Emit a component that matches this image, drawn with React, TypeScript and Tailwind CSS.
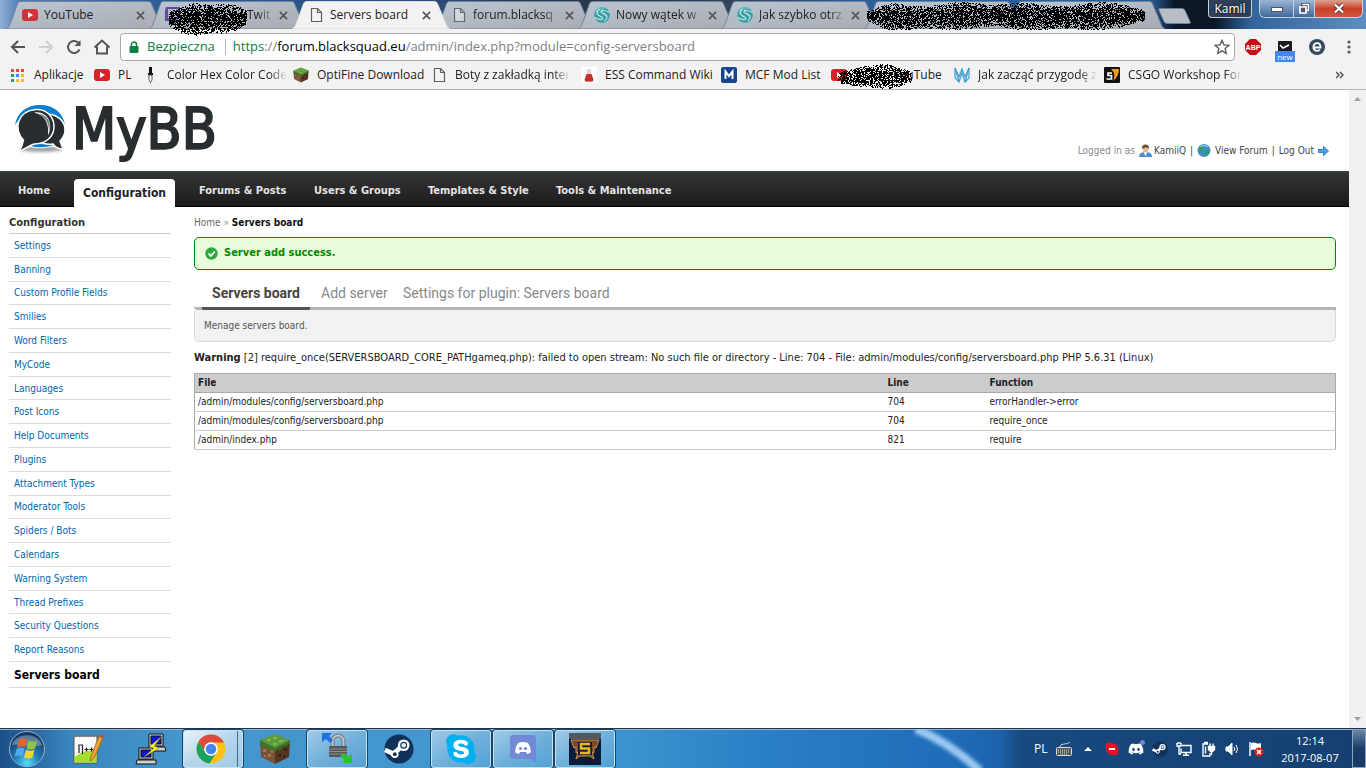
import type { ReactNode } from "react"
import { FaDiscord, FaSkype } from "react-icons/fa"
import clsx from "clsx"

const UI_FONT = "font-['Open_Sans','Noto_Sans',sans-serif]"
const PAGE_FONT = "font-['DejaVu_Sans_Condensed','DejaVu_Sans',sans-serif]"

/* ---------- Scribble used to hide private text ---------- */

function Scribble({ width, height, seed, className }: { width: number; height: number; seed: number; className: string }) {
  let state = seed
  const random = () => {
    state = (state + 0x6d2b79f5) | 0
    let t = Math.imul(state ^ (state >>> 15), 1 | state)
    t = (t + Math.imul(t ^ (t >>> 7), 61 | t)) ^ t
    return ((t ^ (t >>> 14)) >>> 0) / 4294967296
  }
  let d = ""
  for (let y = 0; y < height; y++) {
    for (let x = 0; x < width; x++) {
      const fromEnd = Math.min(x, width - x) / 30
      const reach = (height / 2) * Math.sqrt(Math.min(1, fromEnd + 0.15)) * (0.9 + 0.1 * Math.sin(x / 11 + seed))
      const dy = Math.abs(y - height / 2 - Math.sin(x / 23 + seed)) / reach
      const density = dy < 1 ? 0.78 * (1 - dy * dy * dy * 0.6) : 0
      if (random() < density) d += `M${x} ${y}h1v1h-1z`
    }
  }
  return (
    <svg width={width} height={height} className={clsx("absolute pointer-events-none z-20", className)} shapeRendering="crispEdges" aria-hidden="true">
      <path d={d} fill="#000" />
    </svg>
  )
}

/* ---------- Small icons ---------- */

function YouTubeIcon() {
  return (
    <svg width="16" height="16" viewBox="0 0 16 16">
      <rect x="0" y="2" width="16" height="12" rx="3" fill="#d6252a" />
      <path d="M6 5l5 3-5 3z" fill="#fff" />
    </svg>
  )
}

function PageIcon() {
  return (
    <svg width="16" height="16" viewBox="0 0 16 16" fill="none" stroke="#5f5f5f" strokeWidth="1.2">
      <path d="M3.5 1.5h6l4 4v9h-10z" fill="#f8f8f8" fillOpacity=".5" />
      <path d="M9.5 1.5v4h4" />
    </svg>
  )
}

function TwitchIcon() {
  return (
    <svg width="16" height="16" viewBox="0 0 16 16">
      <path d="M1 0h14v10l-4 4H8l-2 2H4v-2H0V3z" fill="#5b3d9c" />
      <path d="M3 2h10v7l-2 2H8l-2 2v-2H3z" fill="#b6b6c6" />
      <path d="M6 4h1.500v4H6zM10 4h1.500v4H10z" fill="#5b3d9c" />
    </svg>
  )
}

function SwirlIcon() {
  return (
    <svg width="16" height="16" viewBox="0 0 16 16">
      <circle cx="8" cy="8" r="7.800" fill="#249fa6" />
      <path d="M1 3C4 0 10-.5 13 2 9 1.500 5 2.500 4.500 5 4.500 7 12 6 14 9" fill="#4dc0bf" />
      <path d="M15.500 5.500C11 3 7.500 3 7 4.500S13 7 13 10c0 1.500-1 3-2.500 4" fill="none" stroke="#d5e2e6" strokeWidth="1.200" />
      <path d="M.5 10.500C5 13 8.500 13 9 11.500S3 9 3 6c0-1.500 1-3 2.500-4" fill="none" stroke="#d5e2e6" strokeWidth="1.200" />
    </svg>
  )
}

function GrassBlock({ size }: { size: number }) {
  return (
    <svg width={size} height={size} viewBox="0 0 32 32">
      <path d="M1 8l15 7v16L2 24z" fill="#7b5238" />
      <path d="M31 8l-15 7v16l14-7z" fill="#553621" />
      <path d="M16 1l15 6-15 8L1 7z" fill="#5f9a3b" />
      <path d="M1 7l15 8v4l-3-3-2 2-3-4-3 1-2-3-2 1zM31 7l-15 8v4l3-3 2 1 3-4 3 1 2-3 2 1z" fill="#3f7424" />
      <path d="M4 16h3v3H4zM9 21h3v3H9zM12 17h2v3h-2zM5 22h2v2H5z" fill="#9c7253" />
      <path d="M19 21h3v3h-3zM25 15h3v3h-3zM24 22h2v3h-2z" fill="#3c2415" />
      <path d="M14 4h4v2h-4zM8 6h4v2H8zM20 7h4v2h-4zM14 10h4v2h-4z" fill="#7fb855" />
    </svg>
  )
}

function PenIcon() {
  return (
    <svg width="16" height="16" viewBox="0 0 16 16">
      <path d="M6 0h3v6h1v2H5V6h1z" fill="#111" />
      <path d="M6 8h3v5l-1.500 2.500L6 13z" fill="#fff" stroke="#333" strokeWidth=".8" />
    </svg>
  )
}

function FlaskIcon() {
  return (
    <svg width="16" height="16" viewBox="0 0 16 16">
      <rect width="16" height="16" fill="#fff" />
      <path d="M6 2h4v4l2.500 7-1 2h-7l-1-2L6 6z" fill="#e6d2d0" />
      <path d="M5.500 7h5l2 6-1 1.500h-7l-1-1.500z" fill="#c9302a" />
    </svg>
  )
}

function McfIcon() {
  return (
    <svg width="16" height="16" viewBox="0 0 16 16">
      <rect width="16" height="16" rx="2" fill="#17458b" />
      <path d="M4.500 12V4.500L8 9l3.500-4.500V12" fill="none" stroke="#fff" strokeWidth="2" />
    </svg>
  )
}

function WolfIcon() {
  return (
    <svg width="16" height="16" viewBox="0 0 16 16" fill="none" stroke="#3d9fd0" strokeWidth="1.200">
      <path d="M1 1v10l4 4 3-9 3 9 4-4V1l-4 9-3-8-3 8z" />
      <path d="M1 1l4 14M15 1l-4 14" />
    </svg>
  )
}

function SourceIcon() {
  return (
    <svg width="16" height="16" viewBox="0 0 16 16">
      <rect width="16" height="16" rx="1" fill="#111" />
      <path d="M7 2h8c0 5-2 9-6 12 2-5 2-8-2-12z" fill="#f09a20" />
      <path d="M8 6H4v2.500h3.500V12H2.500" fill="none" stroke="#111" strokeWidth="4" />
      <path d="M8 6H4v2.500h3.500V12H2.500" fill="none" stroke="#fff" strokeWidth="1.700" />
    </svg>
  )
}

function AppsIcon() {
  const colors = ["#e8453c", "#e8453c", "#e8453c", "#2f9e58", "#4587f4", "#f9bb2d", "#2f9e58", "#f9bb2d", "#f9bb2d"]
  return (
    <svg width="14" height="14" viewBox="0 0 14 14">
      {colors.map((color, i) => (
        <rect key={i} x={1 + (i % 3) * 5} y={1 + Math.floor(i / 3) * 5} width="3" height="3" fill={color} />
      ))}
    </svg>
  )
}

/* ---------- Browser tabs ---------- */

interface TabInfo {
  title: string
  icon: ReactNode
  active?: boolean
  faded?: boolean
}

const tabs: TabInfo[] = [
  { title: "YouTube", icon: <YouTubeIcon /> },
  { title: "                 - Twit", icon: <TwitchIcon />, faded: true },
  { title: "Servers board", icon: <PageIcon />, active: true },
  { title: "forum.blacksq", icon: <PageIcon />, faded: true },
  { title: "Nowy wątek w", icon: <SwirlIcon />, faded: true },
  { title: "Jak szybko otrz", icon: <SwirlIcon />, faded: true },
  { title: "", icon: null },
  { title: "", icon: null },
]

function BrowserTab({ tab }: { tab: TabInfo }) {
  return (
    <div className={clsx("relative flex items-center h-7 w-[158px] -mr-[15px] pl-4 shrink-0", tab.active && "z-10")}>
      <svg className="absolute inset-0 w-full h-full" viewBox="0 0 158 28" preserveAspectRatio="none">
        <path
          d="M0 28C3 27 4 23 6 18L11 4C12 1 13 .5 15 .5H142C144 .5 145 1 146 4L152 18C154 23 155 27 158 28z"
          fill={tab.active ? "#f2f2f2" : "url(#tabFill)"}
          stroke={tab.active ? "#d8dce2" : "#71839b"}
          strokeWidth="1"
        />
      </svg>
      <span className={clsx("relative w-4 h-4 shrink-0", !tab.active && "opacity-90")}>{tab.icon}</span>
      <span
        className={clsx(
          "relative ml-[6px] w-[88px] whitespace-pre text-xs text-[#222]",
          tab.faded && "[mask-image:linear-gradient(to_right,black_80%,transparent)]"
        )}
      >
        {tab.title}
      </span>
      <button aria-label="Close tab" className="relative w-4 h-4 flex items-center justify-center">
        <svg width="9" height="9" viewBox="0 0 10 10" stroke="#555" strokeWidth="1.800">
          <path d="M1 1l8 8M9 1l-8 8" />
        </svg>
      </button>
    </div>
  )
}

function TabStrip() {
  return (
    <div className="relative flex items-end h-[29px] pl-[6px] bg-[linear-gradient(to_right,#8fb0d6_0px,#4d7cb2_20px,#2c5c94_170px,#2b4f7d_420px,#27354a_560px,#33455c_750px,#2a6099_860px,#2a6099_1150px,#0c1626_1175px,#0c1626_1215px,#31639c_1250px,#5f8dc0_1366px)]">
      <svg width="0" height="0" className="absolute">
        <defs>
          <linearGradient id="tabFill" x1="0" y1="0" x2="1" y2="1">
            <stop offset="0" stopColor="#bac5d3" />
            <stop offset="1" stopColor="#a9acb1" />
          </linearGradient>
        </defs>
      </svg>
      {tabs.map((tab, i) => (
        <BrowserTab key={i} tab={tab} />
      ))}
      <button aria-label="New tab" className="self-start ml-2 mt-2 shrink-0">
        <svg width="34" height="16" viewBox="0 0 34 16">
          <path d="M1 .5h23q2 0 3 2l5 11q1 2-1 2H9q-2 0-3-2L1 2.500q-1-2 1-2z" fill="#b8bec6" stroke="#6d7f95" />
        </svg>
      </button>
      <Scribble width={78} height={36} seed={7} className="left-[169px] top-0" />
      <Scribble width={278} height={28} seed={31} className="left-[867px] top-[2px]" />
      <div className="self-start ml-auto mr-[3px] flex items-start shrink-0">
        <button className="h-[18px] w-[44px] mr-[7px] rounded-b border border-t-0 border-[#c3cfdf] bg-[#30405a] text-xs leading-4 text-white [text-shadow:0_0_3px_black]">
          Kamil
        </button>
        <div className="flex h-[18px] rounded-b-md border border-t-0 border-[#c3d3e6] overflow-hidden">
          <button aria-label="Minimize" className="w-[34px] flex items-center justify-center bg-gradient-to-b from-[#9db6d4] to-[#3f6a9d] border-r border-[#c3d3e6]">
            <svg width="12" height="8">
              <rect x=".5" y="2.500" width="11" height="4" fill="#fff" stroke="#4c5569" />
            </svg>
          </button>
          <button aria-label="Restore" className="w-[21px] flex items-center justify-center bg-gradient-to-b from-[#9db6d4] to-[#3f6a9d] border-r border-[#c3d3e6]">
            <svg width="12" height="12" fill="none">
              <path d="M4.500 1.500h6v6h-6z" stroke="#4c5569" strokeWidth="3" />
              <path d="M4.500 1.500h6v6h-2" stroke="#fff" strokeWidth="1.500" />
              <path d="M2 4h6v6H2z" fill="#4c5569" stroke="#fff" strokeWidth="1.700" />
            </svg>
          </button>
          <button aria-label="Close" className="w-[47px] flex items-center justify-center bg-gradient-to-b from-[#e0a090] via-[#c8402a] to-[#d0573f]">
            <svg width="12" height="11" viewBox="0 0 12 11">
              <path d="M2 1.500l8 8M10 1.500l-8 8" stroke="#5c2f35" strokeWidth="4" />
              <path d="M2 1.500l8 8M10 1.500l-8 8" stroke="#fff" strokeWidth="2.300" />
            </svg>
          </button>
        </div>
      </div>
    </div>
  )
}

/* ---------- Address bar ---------- */

function Toolbar() {
  return (
    <div className="flex items-center h-9 px-[9px] bg-[#f2f2f2]">
      <div className="flex items-center gap-[10px] w-[111px]">
        <button aria-label="Back">
          <svg width="18" height="18" viewBox="0 0 18 18" fill="none" stroke="#555" strokeWidth="2">
            <path d="M16 9H3M9 3L3 9l6 6" />
          </svg>
        </button>
        <button aria-label="Forward">
          <svg width="18" height="18" viewBox="0 0 18 18" fill="none" stroke="#cfcfcf" strokeWidth="2">
            <path d="M2 9h13M9 3l6 6-6 6" />
          </svg>
        </button>
        <button aria-label="Reload">
          <svg width="18" height="18" viewBox="0 0 18 18" fill="none" stroke="#555" strokeWidth="2">
            <path d="M14.500 11.500A6 6 0 1 1 13 4.500L15 6.500" />
            <path d="M15.500 2v6h-6z" fill="#555" stroke="none" />
          </svg>
        </button>
        <button aria-label="Home">
          <svg width="18" height="18" viewBox="0 0 18 18" fill="none" stroke="#555" strokeWidth="2">
            <path d="M1.500 9.500L9 2.500l7.500 7M4 8.500V15.500h10V8.500" />
          </svg>
        </button>
      </div>
      <div className="flex flex-1 items-center h-7 px-2 bg-white border border-[#a9a9a9] rounded-sm">
        <svg width="10" height="13" viewBox="0 0 10 13">
          <path d="M2.500 6V3.500a2.500 2.500 0 0 1 5 0V6" fill="none" stroke="#0b8043" strokeWidth="1.500" />
          <rect x=".5" y="5" width="9" height="7" rx="1" fill="#0b8043" />
        </svg>
        <span className="ml-2 text-[13px] text-[#0b8043]">Bezpieczna</span>
        <span className="w-px h-4 ml-[10px] mr-[7px] bg-[#b5b5b5]" />
        <span className="whitespace-nowrap text-[13px] text-[#808080]">
          <span className="text-[#0b8043]">https</span>://<span className="text-black">forum.blacksquad.eu</span>/admin/index.php?module=config-serversboard
        </span>
        <button aria-label="Bookmark this page" className="ml-auto -mr-1">
          <svg width="16" height="16" viewBox="0 0 16 16" fill="none" stroke="#5a5a5a" strokeWidth="1.400">
            <path d="M8 1.500l2 4.400 4.700.5-3.500 3.200 1 4.700L8 11.900l-4.200 2.400 1-4.700L1.300 6.400 6 5.900z" />
          </svg>
        </button>
      </div>
      <div className="flex items-center gap-4 ml-[10px]">
        <button aria-label="Adblock Plus">
          <svg width="16" height="16" viewBox="0 0 16 16">
            <path d="M5 0h6l5 5v6l-5 5H5l-5-5V5z" fill="#c70d12" />
            <text x="8" y="11" textAnchor="middle" fontSize="7" fontWeight="700" fill="#fff" fontFamily="Liberation Sans">ABP</text>
          </svg>
        </button>
        <button aria-label="Inventory helper" className="flex flex-col items-center w-5 -mx-[2px] -mb-[9px]">
          <svg width="14" height="10" viewBox="0 0 14 10">
            <rect width="14" height="12" rx="1" fill="#1b1b1b" />
            <path d="M2 4l3 3 6-3" fill="none" stroke="#fff" strokeWidth="1.500" />
          </svg>
          <span className="w-5 h-[11px] bg-[#4285f4] text-[8px] leading-[11px] text-white">new</span>
        </button>
        <button aria-label="Encrypted browsing">
          <svg width="16" height="16" viewBox="0 0 16 16">
            <circle cx="8" cy="8" r="8" fill="#34495e" />
            <path d="M4.500 8.500h7c0-6-7-5.500-7-.5 0 4 4.500 5 6.500 2.500" fill="none" stroke="#fff" strokeWidth="1.900" />
          </svg>
        </button>
        <button aria-label="Menu" className="w-4 flex justify-center">
          <svg width="4" height="14" viewBox="0 0 4 14" fill="#5a5a5a">
            <circle cx="2" cy="2" r="1.600" />
            <circle cx="2" cy="7" r="1.600" />
            <circle cx="2" cy="12" r="1.600" />
          </svg>
        </button>
      </div>
    </div>
  )
}

const bookmarks = [
  { title: "Aplikacje", icon: <AppsIcon />, width: "w-[84px]", gap: "gap-[10px]" },
  { title: "PL", icon: <YouTubeIcon />, width: "w-[49px]", gap: "gap-2" },
  { title: "Color Hex Color Code", icon: <PenIcon />, width: "w-[150px]", gap: "gap-2", faded: true },
  { title: "OptiFine Download", icon: <GrassBlock size={16} />, width: "w-[138px]", gap: "gap-2" },
  { title: "Boty z zakładką inter", icon: <PageIcon />, width: "w-[150px]", gap: "gap-2", faded: true },
  { title: "ESS Command Wiki", icon: <FlaskIcon />, width: "w-[140px]", gap: "gap-2" },
  { title: "MCF Mod List", icon: <McfIcon />, width: "w-[110px]", gap: "gap-2" },
  { title: "            YouTube", icon: <YouTubeIcon />, width: "w-[123px]", gap: "gap-2" },
  { title: "Jak zacząć przygodę z", icon: <WolfIcon />, width: "w-[150px]", gap: "gap-2", faded: true },
  { title: "CSGO Workshop For", icon: <SourceIcon />, width: "w-[138px]", gap: "gap-2", faded: true },
]

function BookmarksBar() {
  return (
    <nav className="relative flex items-center h-[25px] pb-[6px] pt-px pl-[10px] pr-[22px] bg-[#f2f2f2] border-b border-[#b6b4b6] text-xs text-[#222]">
      {bookmarks.map((item, i) => (
        <a key={i} href="#" className={clsx("flex items-center shrink-0", item.width, item.gap)}>
          <span className="shrink-0">{item.icon}</span>
          <span className={clsx("whitespace-pre", item.faded && "[mask-image:linear-gradient(to_right,black_85%,transparent)]")}>
            {item.title}
          </span>
        </a>
      ))}
      <button aria-label="More bookmarks" className="ml-auto">
        <svg width="8" height="8" viewBox="0 0 8 8" fill="none" stroke="#555" strokeWidth="1.500">
          <path d="M0 1l3 3-3 3M4 1l3 3-3 3" />
        </svg>
      </button>
      <Scribble width={74} height={26} seed={53} className="left-[838px] -top-px" />
    </nav>
  )
}

/* ---------- MyBB admin page ---------- */

function Logo() {
  return (
    <div className="flex items-start">
      <svg width="52" height="52" viewBox="0 0 52 52" className="mt-[13px]">
        <defs>
          <filter id="logoShadow" x="-20%" y="-60%" width="140%" height="220%">
            <feGaussianBlur stdDeviation="1.500" />
          </filter>
        </defs>
        <ellipse cx="27" cy="46" rx="22" ry="3" fill="#777" opacity=".7" filter="url(#logoShadow)" />
        <path d="M1 22C3 9 13 2 26 2s23 7 25 20c-4-7-12-12-25-12S5 15 1 22z" fill="#0a7fd0" />
        <path d="M16 43c8-5 16-5 24-1-6 3-18 4-24 1z" fill="#0a7fd0" stroke="#fff" />
        <path d="M34 11c11 1 17 8 17 16 0 5-2 8-5 11l3 8c-4 0-8-2-10-5-7 1-13-1-15-4z" fill="#282d2f" stroke="#fff" strokeWidth="1.500" />
        <path d="M22 6.500c12-.5 18 9 18 17 0 10-8 17.500-20 17.500-3 1-8 4-15 7.500 3-4 4-8 4.500-11.500C-1 27 3 8 22 6.500z" fill="#282d2f" stroke="#fff" strokeWidth="1.500" />
        <path d="M20 9.500c14-2 20 12 14 23 1-9-1-20-14-23z" fill="#fff" />
        <path d="M24 10.500c10 1 14 10 11 18 0-8-3-14-11-18z" fill="#282d2f" opacity=".6" />
      </svg>
      <span className="ml-[6px] mt-[3px] text-[57px] leading-[72px] text-[#282d2f] [-webkit-text-stroke:2px_#282d2f]">MyBB</span>
    </div>
  )
}

function Header() {
  return (
    <header className="flex justify-between h-[81px] pl-[14px] pr-5">
      <Logo />
      <div className="flex items-center self-end mb-3 text-[10px] leading-4 text-[#444]">
        <span className="text-[#8b8b8b] mr-1">Logged in as</span>
        <a href="#" className="flex items-center gap-[2px]">
          <svg width="13" height="14" viewBox="0 0 13 14">
            <path d="M0 13c0-4 3-5 6.500-5s6.500 1 6.500 5z" fill="#4a8fd6" />
            <path d="M4.500 8h4l-2 4z" fill="#fff" />
            <ellipse cx="6.500" cy="5" rx="2.800" ry="3.500" fill="#e8b98c" />
            <path d="M3 5c-1-6 8-6 7 0-1-2-5-2-7 0z" fill="#6b4a2c" />
          </svg>
          KamiiQ
        </a>
        <span className="mx-1">|</span>
        <a href="#" className="flex items-center gap-1">
          <svg width="14" height="14" viewBox="0 0 13 14">
            <circle cx="6.500" cy="6.500" r="6.500" fill="#3f8ccc" />
            <path d="M3 2c3 0 4 1 3 3s-3 2-4 1S1 4 3 2zM7 7c3-1 5 0 5 1-1 3-3 4-4 4-1-1-1-3-1-5z" fill="#2f9e58" />
            <path d="M3 2.500q3-2 7 0" stroke="#b8dcf4" fill="none" />
          </svg>
          View Forum
        </a>
        <span className="mx-1">|</span>
        <a href="#" className="flex items-center gap-1">
          Log Out
          <svg width="11" height="10" viewBox="0 0 11 10">
            <path d="M.5 3.500h5v-3L10.500 5l-5 4.500v-3h-5z" fill="#4aa0e4" stroke="#2c84cf" />
          </svg>
        </a>
      </div>
    </header>
  )
}

function MainMenu() {
  return (
    <nav className="flex items-center h-9 pt-1 pl-[18px] bg-gradient-to-b from-[#363636] to-[#1b1b1b] border-t border-t-[#2f4646] border-b border-b-black text-[11px] font-bold text-[#e3e3e3]">
      <a href="#" className="w-14">Home</a>
      <a href="#" className="self-end -mb-px w-[101px] h-7 mr-6 rounded-t bg-white text-center text-xs leading-7 text-[#222]">Configuration</a>
      <a href="#" className="w-[115px]">Forums &amp; Posts</a>
      <a href="#" className="w-[114px]">Users &amp; Groups</a>
      <a href="#" className="w-32">Templates &amp; Style</a>
      <a href="#">Tools &amp; Maintenance</a>
    </nav>
  )
}

const sideLinks = [
  "Settings",
  "Banning",
  "Custom Profile Fields",
  "Smilies",
  "Word Filters",
  "MyCode",
  "Languages",
  "Post Icons",
  "Help Documents",
  "Plugins",
  "Attachment Types",
  "Moderator Tools",
  "Spiders / Bots",
  "Calendars",
  "Warning System",
  "Thread Prefixes",
  "Security Questions",
  "Report Reasons",
]

function Sidebar() {
  return (
    <aside className="w-[162px] shrink-0">
      <h2 className="pt-2 pb-[2px] text-[11px] leading-4 font-bold text-[#333] border-b border-[#ccc]">Configuration</h2>
      <ul className="grid auto-rows-fr h-[428px] text-[10px]">
        {sideLinks.map((label) => (
          <li key={label} className="flex items-center pl-[5px] border-b border-[#ddd]">
            <a href="#" className="text-[#0066b0]">{label}</a>
          </li>
        ))}
      </ul>
      <a href="#" className="block pl-[5px] h-[26px] leading-[26px] text-xs font-bold text-black border-b border-[#ddd]">Servers board</a>
    </aside>
  )
}

const backtrace = [
  { file: "/admin/modules/config/serversboard.php", line: 704, fn: "errorHandler->error" },
  { file: "/admin/modules/config/serversboard.php", line: 704, fn: "require_once" },
  { file: "/admin/index.php", line: 821, fn: "require" },
]

function Content() {
  return (
    <main className="flex-1 min-w-0 pt-2">
      <div className="text-[10px] leading-4 text-[#666]">
        <a href="#">Home</a> <span className="text-[#999]">»</span> <strong className="text-[#111]">Servers board</strong>
      </div>
      <div className="flex items-center gap-[6px] h-[33px] mt-[6px] pl-[10px] border border-[#080] rounded-[5px] bg-[#e8fcdc] text-[11px] font-bold text-[#080]">
        <svg width="13" height="13" viewBox="0 0 13 13">
          <circle cx="6.500" cy="6.500" r="6.200" fill="#2fa83f" />
          <path d="M3.500 6.500l2.300 2.500 4-4.500" fill="none" stroke="#fff" strokeWidth="1.800" />
        </svg>
        Server add success.
      </div>
      <div className="flex mt-[9px] pl-2 font-[Roboto,'Open_Sans',sans-serif] text-sm leading-7 whitespace-nowrap text-[#888] border-b-[3px] border-[#b5b5b5] rounded-bl-sm">
        <a href="#" className="-mb-[3px] w-[108px] text-center border-b-[3px] border-[#555] font-bold text-[#444]">Servers board</a>
        <a href="#" className="ml-[11px] w-[82px]">Add server</a>
        <a href="#">Settings for plugin: Servers board</a>
      </div>
      <div className="h-[32px] pl-[9px] leading-[31px] text-[10px] text-[#555] bg-[#f2f2f2] border border-t-0 border-[#d8d8d8] rounded-b-[5px]">Menage servers board.</div>
      <p className="mt-2 mb-[7px] text-[11px] leading-4 text-[#222]">
        <strong>Warning</strong> [2] require_once(SERVERSBOARD_CORE_PATHgameq.php): failed to open stream: No such file or directory - Line: 704 - File: admin/modules/config/serversboard.php PHP 5.6.31 (Linux)
      </p>
      <table className="w-full table-fixed border-collapse border border-[#aaa] text-[10px] leading-[18px] text-left text-[#222]">
        <thead>
          <tr className="bg-[#ccc] border-b border-[#aaa]">
            <th className="w-[690px] pl-[3px]">File</th>
            <th className="w-[102px] pl-[3px]">Line</th>
            <th className="pl-[3px]">Function</th>
          </tr>
        </thead>
        <tbody>
          {backtrace.map((row, i) => (
            <tr key={i} className="border-b border-[#ccc]">
              <td className="pl-[3px]">{row.file}</td>
              <td className="pl-[3px]">{row.line}</td>
              <td className="pl-[3px]">{row.fn}</td>
            </tr>
          ))}
        </tbody>
      </table>
    </main>
  )
}

/* ---------- Windows taskbar ---------- */

function StartOrb() {
  return (
    <svg width="38" height="38" viewBox="0 0 38 38">
      <defs>
        <radialGradient id="orb" cx=".5" cy=".9" r=".8">
          <stop offset="0" stopColor="#4fe0f8" />
          <stop offset=".45" stopColor="#2479b5" />
          <stop offset="1" stopColor="#17395f" />
        </radialGradient>
      </defs>
      <circle cx="19" cy="19" r="17.500" fill="url(#orb)" stroke="#8fb6d4" />
      <path d="M4 15C8 2 30 2 34 15 26 18 14 13 4 15z" fill="#fff" opacity=".3" />
      <path d="M11 10q4-2.500 8-.5l-2 8q-4-2-8 .5z" fill="#e8622c" />
      <path d="M20.500 10.500q4 2.500 8.500 0l-2 8q-4 2-8.500 0z" fill="#8fc641" />
      <path d="M8.500 19q4-2.500 8-.5l-2 8q-4-2-8 .5z" fill="#4fa8e8" />
      <path d="M18 19.500q4 2.500 8.500 0l-2 8q-4 2-8.500 0z" fill="#fbd23c" />
    </svg>
  )
}

function NotepadIcon() {
  return (
    <svg width="32" height="32" viewBox="0 0 32 32">
      <path d="M1 3h23v27H1z" fill="#fafafa" stroke="#555" />
      <path d="M1.500 24q10-8 22-6v11.500h-22z" fill="#a6e02c" />
      <path d="M2 3h21" stroke="#777" strokeDasharray="2 1" strokeWidth="2" />
      <path d="M6 20v-8h3.500v9M11.500 16.500h4M13.500 14.500v4M16.500 16.500h4M18.500 14.500v4" stroke="#222" strokeWidth="1.200" fill="none" />
      <path d="M26 3l4 2-9 20-4 3 1-5z" fill="#f0a030" stroke="#8c5a1a" strokeWidth=".7" />
      <path d="M26 3l2-2 3 2-1 2z" fill="#d8473c" />
    </svg>
  )
}

function PuttyIcon() {
  return (
    <svg width="32" height="32" viewBox="0 0 32 32">
      <g stroke="#111" strokeWidth="1">
        <path d="M14 1h14v12H14zM13 14h17l1 4H13z" fill="#d0d0d0" />
        <path d="M16 3h10v8H16z" fill="#1414d8" />
        <path d="M4 15h14v11H4zM2 27h19v4H1z" fill="#d0d0d0" />
        <path d="M6 17h10v7H6z" fill="#1414d8" />
        <path d="M27 3L14 14l5 1L9 24l15-9-5-2z" fill="#ff0" stroke="#776" strokeWidth=".5" />
      </g>
    </svg>
  )
}

function ChromeIcon() {
  return (
    <svg width="30" height="30" viewBox="0 0 30 30">
      <circle cx="15" cy="15" r="14.500" fill="#fbc116" />
      <path d="M2.500 7.700A14.500 14.500 0 0 1 28 8.500H15a6.500 6.500 0 0 0-5.700 9.700z" fill="#dd4b3e" />
      <path d="M2.500 7.700a14.500 14.500 0 0 0 11 21.700L20.600 18.300a6.500 6.500 0 0 1-11.200 0z" fill="#1aa15f" />
      <circle cx="15" cy="15" r="6.800" fill="#fff" />
      <circle cx="15" cy="15" r="5.300" fill="#4587f0" />
    </svg>
  )
}

function WinScpIcon() {
  return (
    <svg width="32" height="32" viewBox="0 0 32 32">
      <path d="M11.500 14V8a5.500 5.500 0 0 1 11 0v6" fill="none" stroke="#75797b" strokeWidth="3.800" />
      <path d="M11.500 14V8a5.500 5.500 0 0 1 11 0v6" fill="none" stroke="#c2c6c8" strokeWidth="1.800" />
      <rect x="8" y="13" width="18" height="11" rx="1" fill="#54575a" />
      <path d="M8 16h18M8 18.500h18M8 21h18" stroke="#8b8e90" />
      <path d="M1 0h10L8 3l4 4-3 3-4-4-4 3z" fill="#1f70e0" />
      <path d="M31 30H21l3-3-5-4 4-3 4 4 4-3z" fill="#28c42e" />
    </svg>
  )
}

function SteamDisc({ size }: { size: number }) {
  return (
    <svg width={size} height={size} viewBox="0 0 32 32">
      <circle cx="16" cy="16" r="15.500" fill="#10315a" />
      <path d="M1 17l9 4 8-7" stroke="#fff" strokeWidth="5" fill="none" />
      <circle cx="21" cy="12" r="5" fill="#10315a" stroke="#fff" strokeWidth="2.500" />
      <circle cx="21" cy="12" r="2.500" fill="#e9eef3" />
      <circle cx="11.500" cy="21.500" r="4" fill="#fff" />
      <circle cx="11.500" cy="21.500" r="2" fill="#10315a" />
    </svg>
  )
}

function DiscordTile() {
  return (
    <svg width="28" height="30" viewBox="0 0 28 30">
      <path d="M4 1h20a3 3 0 0 1 3 3v25l-5-4H4a3 3 0 0 1-3-3V4a3 3 0 0 1 3-3z" fill="#7289d6" />
      <path d="M9 9q5-2 10 0 3 4 3 9-2 2-4 2l-1-2h-6l-1 2q-2 0-4-2 0-5 3-9z" fill="#fff" />
      <circle cx="11.500" cy="14.500" r="1.600" fill="#7289d6" />
      <circle cx="16.500" cy="14.500" r="1.600" fill="#7289d6" />
    </svg>
  )
}

function SmiteIcon() {
  return (
    <svg width="32" height="32" viewBox="0 0 32 32">
      <rect width="32" height="32" fill="#0d1c36" />
      <rect width="32" height="6" fill="#53585f" />
      <path d="M2 7h28l-3 8-2-1v6l-2-1 2 7-4-3H11l-4 3 2-7-2 1v-6l-2 1z" fill="#7a4a2b" stroke="#c98e56" />
      <path d="M9 9h14v13H9z" fill="#12203a" />
      <path d="M21 11h-9v4.500h8V20h-9" fill="none" stroke="#e8b820" strokeWidth="2.500" />
    </svg>
  )
}

const taskButtons = [
  { name: "Notepad++", icon: <NotepadIcon />, open: false },
  { name: "PuTTY", icon: <PuttyIcon />, open: false },
  { name: "Google Chrome", icon: <ChromeIcon />, open: true, active: true },
  { name: "Minecraft", icon: <GrassBlock size={32} />, open: false },
  { name: "WinSCP", icon: <WinScpIcon />, open: true },
  { name: "Steam", icon: <SteamDisc size={30} />, open: false },
  {
    name: "Skype",
    icon: (
      <FaSkype className="w-[34px] h-[34px] text-[#00aff0] [background:radial-gradient(circle,white_40%,transparent_42%)]" />
    ),
    open: true,
  },
  { name: "Discord", icon: <DiscordTile />, open: true },
  { name: "Smite", icon: <SmiteIcon />, open: true },
]

function Tray() {
  return (
    <div className="flex items-center ml-auto h-full text-white">
      <span className="w-[22px] text-xs">PL</span>
      <svg width="16" height="14" viewBox="0 0 16 14" className="mr-[11px]">
        <path d="M4 5q0-3 4-3t6-2" stroke="#ccc" fill="none" />
        <rect x=".5" y="5.500" width="15" height="8" rx="1" fill="#555" stroke="#ddd" />
        <path d="M2 8h12M2 10h12M4 12h8" stroke="#ddd" strokeDasharray="1 1" />
      </svg>
      <button aria-label="Show hidden icons" className="mr-[11px]">
        <svg width="10" height="5">
          <path d="M1 5l4-4 4 4z" fill="#fff" />
        </svg>
      </button>
      <div className="flex items-center gap-2">
        <svg width="16" height="16" viewBox="0 0 16 16">
          <path d="M2 2q3-1 5 0 7 0 7 6 1 3 0 5-3 2-5 1-6 0-7-6-1-3 0-6z" fill="#e81123" />
          <path d="M5 8h6" stroke="#fff" strokeWidth="2" />
        </svg>
        <span className="relative">
          <FaDiscord className="w-4 h-4" />
          <span className="absolute -top-px -right-px w-[5px] h-[5px] rounded-full bg-[#7289da]" />
        </span>
        <SteamDisc size={16} />
        <svg width="16" height="16" viewBox="0 0 16 16" fill="none" stroke="#fff" strokeWidth="1.400">
          <path d="M6 4.500h9v7H5v-4M10 11.500v2M7 14.300h6M1 2v3h4V2M3 5v8h2M2 1v2M4 1v2" />
        </svg>
        <svg width="16" height="16" viewBox="0 0 16 16" fill="none" stroke="#fff" strokeWidth="1.400">
          <path d="M8 3H3v12h7v-3M4 1.500h4M5.500 5.500v7" />
          <path d="M8.500 5.500h6v3l-2 2h-2l-2-2z" fill="#fff" />
          <path d="M10 2.500v3M13 2.500v3M11.500 10v4" />
        </svg>
        <svg width="16" height="16" viewBox="0 0 16 16" fill="none" stroke="#fff">
          <path d="M2 6h2l4-4v12l-4-4H2z" fill="#fff" />
          <path d="M10 6q1.500 2 0 4M12 4q3 4 0 8" />
        </svg>
        <svg width="16" height="16" viewBox="0 0 16 16">
          <path d="M2 1v14" stroke="#fff" strokeWidth="1.500" />
          <path d="M3 2q3-1 5 0t5 0v7q-3 1-5 0t-5 0z" fill="#fff" />
          <circle cx="11" cy="11" r="4.500" fill="#d8231f" />
          <path d="M9 9l4 4M13 9l-4 4" stroke="#fff" strokeWidth="1.500" />
        </svg>
      </div>
      <div className="w-[84px] ml-1 text-center text-[11px] leading-[17px]">
        <div>12:14</div>
        <div>2017-08-07</div>
      </div>
      <button aria-label="Show desktop" className="w-[14px] h-full border border-[#8aa4c2] bg-gradient-to-b from-[#6d87a5] via-[#1a3c66] to-[#183a64]" />
    </div>
  )
}

function Taskbar() {
  return (
    <footer className="relative flex items-center h-10 pl-2 border-t border-[#1c3450] shadow-[inset_0_1px_0_#9db6cf] overflow-hidden bg-[linear-gradient(to_right,#1c5089_0px,#3a86bd_70px,#4596cb_180px,#3f97d0_600px,#2a80c6_760px,#1f6cb8_950px,#1d62ab_1000px,#174a80_1020px,#163f70_1366px)]">
      <svg className="absolute left-[900px] top-0" width="100" height="40" viewBox="0 0 100 40" aria-hidden="true">
        <defs>
          <filter id="glow">
            <feGaussianBlur stdDeviation="1.500" />
          </filter>
        </defs>
        <path d="M16 0Q50 14 80 42" fill="none" stroke="#7fb8ee" strokeWidth="12" opacity=".35" filter="url(#glow)" />
        <path d="M16 0Q50 14 80 42" fill="none" stroke="#a9d2f8" strokeWidth="7" opacity=".85" filter="url(#glow)" />
      </svg>
      <button aria-label="Start" className="mr-[13px]">
        <StartOrb />
      </button>
      <div className="flex gap-[2px] h-full pt-px">
        {taskButtons.map((task) => (
          <button
            key={task.name}
            aria-label={task.name}
            className={clsx(
              "relative w-[60px] h-[38px] flex items-center justify-center rounded-[3px]",
              task.open && "border border-[#c5e2f3] shadow-[0_0_0_1px_#1d4563] bg-gradient-to-br",
              task.open && !task.active && "from-white/50 via-white/25 to-white/10",
              task.active && "pr-1 from-white/90 via-white/60 to-white/50"
            )}
          >
            {task.active && <span className="absolute right-1 top-0 h-full w-px bg-[#3f6f94]" />}
            {task.icon}
          </button>
        ))}
      </div>
      <Tray />
    </footer>
  )
}

export default function App() {
  return (
    <div className={clsx("flex flex-col min-h-screen bg-white", UI_FONT)}>
      <TabStrip />
      <Toolbar />
      <BookmarksBar />
      <div className="flex flex-1">
        <div className={clsx("flex-1 min-w-0", PAGE_FONT)}>
          <Header />
          <MainMenu />
          <div className="flex gap-[23px] pl-[9px] pr-[13px]">
            <Sidebar />
            <Content />
          </div>
        </div>
        <div className="flex flex-col justify-between items-center w-[17px] py-[6px] bg-[#f1f1f1]">
          <svg width="7" height="5">
            <path d="M0 5l3.500-4L7 5z" fill="#a0a0a0" />
          </svg>
          <svg width="7" height="5">
            <path d="M0 0l3.500 4L7 0z" fill="#a0a0a0" />
          </svg>
        </div>
      </div>
      <Taskbar />
    </div>
  )
}
